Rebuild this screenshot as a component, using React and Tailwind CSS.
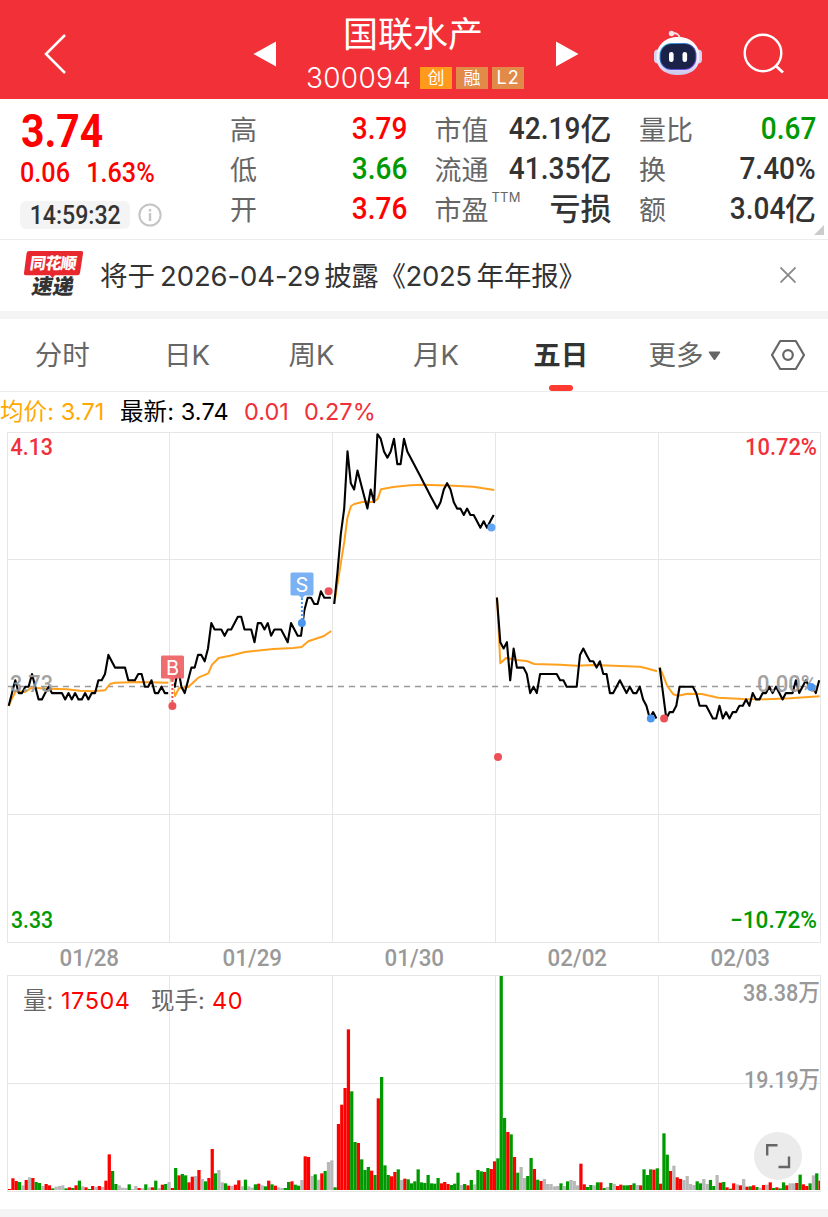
import React from "react";
import clsx from "clsx";

const STEP = 3.322;
const DAY_WIDTH = 162.75;
const BASE_Y = 254.7;
const TICK = 6.36;

// price of each sample, in cents above the previous close
const prices = [
  [-3, -1, 1, -1, -1, 0, 0, 2, 0, -2, -2, -1, 0, -1, -1, -1, -1, -2, -1, -2, -1, -2, -2, -1, -2, -1, -1, 1, 1, 2, 5, 4, 3, 3, 3, 3, 1, 1, 1, 2, 2, 0, 0, 1, -1, -1, 0, -1, -1],
  [1, 0, 3, 0, -1, 1, 3, 3, 5, 5, 4, 6, 10, 9, 9, 9, 8, 9, 9, 10, 11, 11, 9, 9, 9, 7, 10, 10, 9, 10, 8, 9, 9, 9, 8, 7, 10, 9, 8, 8, 12, 14, 14, 13, 13, 15, 14, 14, 14],
  [13, 18, 24, 28, 37, 32, 31, 34, 32, 30, 28, 31, 29, 39.7, 39, 37, 36, 37, 39, 35, 35, 39, 37, 36, 35, 34, 33, 32, 31, 30, 29, 28, 29, 31, 32, 31, 29, 28, 28, 27, 28, 27, 27, 26, 25, 26, 25, 26, 27],
  [14, 7, 6, 7, 1, 6, 3, 3, 3, 2, -1, 0, -1, 2, 2, 2, 2, 2, 2, 1, 1, 0, 0, 0, 0, 5, 6, 5, 4, 4, 3, 4, 2, 2, -1, -1, 0, 1, 0, -1, 0, -1, -1, 0, -2, -3, -5, -4, -5],
  [3, -1, -5, -4, -4, -3, 0, 0, 0, 0, 0, -1, -3, -3, -3, -4, -5, -5, -3, -5, -4, -5, -4, -4, -3, -3, -2, -3, -1, -2, -2, -1, -1, 0, -1, 0, -1, -2, -1, -1, -1, 1, -1, 0, 1, 0, 0, -1, 1],
];

const averages = [
  "8.7,274 12,266.3 16,259 25,260 31.7,255.7 50,256.7 67,257.3 80,258.7 93,259.3 105,258.3 110,252 115,250.7 140,250 168.3,250.7",
  "171.3,248.3 175,264 179,256.3 188.3,255 198.3,245.7 208.3,241.3 212,232.7 218.7,226 230,223.7 245,220 273.3,217 293.3,216 301.7,215 308.3,209.3 323.3,204.3 331.3,199",
  "334.3,171.7 340,136.3 344.3,109.7 347.3,86.3 351,74 354.3,72 363.3,69.7 373.3,70 377.7,67 381,57.3 393.3,55 410,53.3 423.3,52.7 453.3,53.7 473.3,54.7 494.3,58",
  "497,165.3 500.3,231.3 506,226 516.7,228 526.7,229 534.3,232 560,232.7 576.7,233.7 593.3,233 640,234.7 648.3,236.7 657,239.3",
  "660,235.7 667.3,254 673.3,262.3 678.3,263.7 687.3,261.7 701.7,262 718.3,265.7 743.3,267 766.7,267.3 790,266.3 819.7,264.3",
];

const dots = [
  { x: 172.4, y: 274, color: "#eb5257" },
  { x: 328.6, y: 159.2, color: "#eb5257" },
  { x: 498, y: 325, color: "#eb5257" },
  { x: 664.1, y: 286.6, color: "#eb5257" },
  { x: 301.9, y: 191, color: "#4b96ef" },
  { x: 491.4, y: 95.4, color: "#62a4f4" },
  { x: 650.8, y: 286.6, color: "#4b96ef" },
  { x: 811, y: 255, color: "#4b96ef" },
];

// r = up, g = down, x = flat, number is the bar height in thirds of a pixel
const volumes = [
  "r3 r35 r27 g24 x14 r30 x38 r36 g24 g21 x12 r18 r14 g5 x10 x12 x14 g5 r8 g6 r14 g28 x11 r8 g3 r12 x9 r12 x9 r28 r107 g57 g18 x14 x7 x6 g17 x3 x12 r6 x5 g17 x8 r8 g28 x6 r16 g18 x24",
  "r6 g66 r44 g48 g44 r23 r40 x42 r60 x33 g26 r36 r123 g50 x60 x23 g20 r13 x12 r16 r29 x11 g31 x11 x7 g17 r19 x14 g11 r28 g17 r13 x8 x6 g6 g24 r26 g16 g13 x30 r101 r99 x42 g47 x31 r50 g57 x84 x89",
  "g8 r198 r256 r306 r482 g296 g144 r141 g92 g60 g69 r58 g45 r275 g339 g74 g45 r41 r54 g62 x30 r34 g32 g20 g26 g62 g23 g21 g45 g20 g19 g36 r20 r24 r18 g15 g19 g52 x15 g18 r14 g30 x17 g60 g56 r54 g66 r63 r86",
  "g95 g642 g216 r174 g167 r99 g52 x69 x36 g42 g96 r63 g31 r27 x33 x18 x18 x11 x12 g20 x12 g26 x30 x27 x14 r79 r17 g9 g15 x14 g23 r23 g6 x9 g21 x18 r12 r16 g14 g14 r15 g20 x15 r14 g62 g45 g62 r61 g65",
  "r19 g170 g106 r57 x73 r38 r33 x30 x42 x18 x15 g26 g20 x33 x18 g30 g12 x45 r22 g24 r8 g4 r20 x17 r14 x33 r10 g11 r14 g9 x7 r15 x16 r23 g6 r8 g5 g23 r14 x20 x20 r21 g46 r17 r12 g20 x44 g50 r28",
];

const barColors = { r: "#ff0000", g: "#009900", x: "#b8b8b8" };

const dates = ["01/28", "01/29", "01/30", "02/02", "02/03"];

const stats = [
  [
    { label: "高", value: "3.79", color: "text-[#ff0000]" },
    { label: "低", value: "3.66", color: "text-[#009900]" },
    { label: "开", value: "3.76", color: "text-[#ff0000]" },
  ],
  [
    { label: "市值", value: "42.19", unit: "亿" },
    { label: "流通", value: "41.35", unit: "亿" },
    { label: "市盈", sup: "TTM", unit: "亏损" },
  ],
  [
    { label: "量比", value: "0.67", color: "text-[#009900]" },
    { label: "换", value: "7.40%" },
    { label: "额", value: "3.04", unit: "亿" },
  ],
];

const tabs = ["分时", "日K", "周K", "月K", "五日"];

const Robot = () => (
  <svg width="50" height="46" viewBox="0 0 50 46" fill="none">
    <defs>
      <linearGradient id="shell" x1="0" y1="0" x2="0" y2="1">
        <stop offset="0" stopColor="#ffffff" />
        <stop offset="0.6" stopColor="#efeefb" />
        <stop offset="1" stopColor="#c9c6ec" />
      </linearGradient>
      <linearGradient id="visor" x1="0" y1="0" x2="1" y2="1">
        <stop offset="0" stopColor="#35c4e8" />
        <stop offset="0.5" stopColor="#3a55c8" />
        <stop offset="1" stopColor="#9a4cf0" />
      </linearGradient>
    </defs>
    <path d="M19 3.500c4.500-1 7.500 1 7.500 5" stroke="#f6dfe6" strokeWidth="1.800" />
    <circle cx="18.500" cy="3.500" r="2.700" fill="#f7e4ea" />
    <rect x="1" y="19.500" width="8" height="14" rx="4" fill="#d5d3ee" />
    <rect x="41" y="19.500" width="8" height="14" rx="4" fill="#d5d3ee" />
    <path d="M25 7C37 7 46.500 14.500 46.500 27S37 45 25 45 3.500 39.500 3.500 27 13 7 25 7z" fill="url(#shell)" />
    <rect x="6.500" y="13" width="37" height="27" rx="12" fill="url(#visor)" />
    <rect x="7.500" y="14" width="35" height="25" rx="11" fill="#1a2347" />
    <rect x="16" y="22" width="4.600" height="10" rx="2.300" fill="#fff" />
    <rect x="29.500" y="22" width="4.600" height="10" rx="2.300" fill="#fff" />
  </svg>
);

const Header = () => (
  <header className="flex h-[99px] items-center bg-[#f23037] text-white">
    <svg className="mt-[9px] ml-[42px]" width="26" height="42" viewBox="0 0 26 42" fill="none">
      <path d="M23 2 4 21l19 19" stroke="#fff" strokeWidth="2.500" />
    </svg>
    <svg className="mt-[8px] ml-[185px]" width="24" height="26" viewBox="0 0 24 26">
      <path d="M23 .5v25L.5 13z" fill="#fff" />
    </svg>
    <div className="flex w-[278px] flex-col items-center pt-[8px]">
      <h1 className="mr-[6px] text-[35px] leading-[42px]">国联水产</h1>
      <div className="mt-[6px] mr-[2px] flex h-[34px] items-center gap-[4px]">
        <span className="mr-[5px] text-[28px] leading-none font-light tracking-[0.3px]">300094</span>
        <span className="h-[22px] w-8 bg-[#ff9a1c] text-center text-[17px] leading-[22px]">创</span>
        <span className="h-[22px] w-8 bg-[#e28b48] text-center text-[17px] leading-[22px]">融</span>
        <span className="h-[22px] w-8 bg-[#e28b48] text-center text-[18px] leading-[22px] tracking-[1px]">L2</span>
      </div>
    </div>
    <svg className="mt-[8px]" width="24" height="26" viewBox="0 0 24 26">
      <path d="M1 .5v25L23.500 13z" fill="#fff" />
    </svg>
    <div className="mt-[7px] ml-[74px]">
      <Robot />
    </div>
    <svg className="mt-[9px] ml-[40px]" width="42" height="42" viewBox="0 0 42 42" fill="none">
      <circle cx="20" cy="20" r="18.300" stroke="#fff" strokeWidth="2.400" />
      <path d="m33 33 7 6.500" stroke="#fff" strokeWidth="2.800" />
    </svg>
  </header>
);

const StatRow = ({ label, sup, value, unit, color }) => (
  <div className="flex h-[40px] items-center justify-between">
    <div className="flex items-center pt-[3px] text-[27px] leading-[40px] text-[#666]">
      {label}
      {sup && <span className="-mt-[28px] ml-[3px] text-[13px] tracking-[0.2px]">{sup}</span>}
    </div>
    <div className={clsx("flex items-center leading-[40px]", color || "text-[#333]")}>
      {value && (
        <span className="origin-right scale-x-[0.89] font-['Roboto'] text-[31.5px] font-medium">
          {value}
        </span>
      )}
      {unit && <span className="-mt-px text-[31px] font-medium">{unit}</span>}
    </div>
  </div>
);

const Quote = () => (
  <section className="relative flex h-[141px] border-b border-[#ececec] pt-[10px]">
    <div className="w-[230px] pl-[20px] font-['Roboto'] text-[#ff0000]">
      <div className="h-[45px] origin-left scale-x-[0.89] pl-px text-[46px] leading-[44px] font-bold">3.74</div>
      <div className="flex h-[37px] origin-left scale-x-[0.9] items-center gap-[18px] text-[28px] font-medium">
        <span>0.06</span>
        <span>1.63%</span>
      </div>
      <div className="mt-[10px] flex items-center gap-[8px]">
        <div className="flex h-[28px] w-[110px] items-center justify-center rounded-md bg-[#f4f4f4]">
          <span className="scale-x-[0.89] text-[26px] leading-none font-medium text-[#333]">14:59:32</span>
        </div>
        <svg width="24" height="24" viewBox="0 0 24 24" fill="none">
          <circle cx="12" cy="12" r="10.600" stroke="#c4c4c4" strokeWidth="2" />
          <path d="M12 10v8M12 6v2.400" stroke="#c4c4c4" strokeWidth="2.400" />
        </svg>
      </div>
    </div>
    <div className="flex gap-[27.500px]">
      {stats.map((rows, i) => (
        <div key={i} className="w-[177px]">
          {rows.map((row) => (
            <StatRow key={row.label} {...row} />
          ))}
        </div>
      ))}
    </div>
    <svg className="absolute right-[4px] bottom-[4px]" width="10" height="10" viewBox="0 0 10 10">
      <path d="M10 0v10H0z" fill="#ccc" />
    </svg>
  </section>
);

const Notice = () => (
  <section className="flex h-[71px] items-center">
    <div className="relative ml-[24px] flex h-[48px] w-[59px] flex-col items-center">
      <svg className="absolute -top-px left-0" width="59" height="28" viewBox="0 0 59 28">
        <path d="M5 0h52q2.500 0 2 2.500L56 22q-.5 2.200-2.500 2.200H31L28.500 27 26 24.200H2Q-.3 24.200 0 22L2.600 2.200Q3 0 5 0z" fill="#e8272f" />
      </svg>
      <span className="relative -mt-px h-[25px] -skew-x-[8deg] text-[16px] leading-[24px] font-black tracking-[-0.6px] text-white">
        同花顺
      </span>
      <span className="mr-[2px] -skew-x-[10deg] text-[21px] leading-[22px] font-black text-[#333]">速递</span>
    </div>
    <p className="ml-[17px] flex text-[27.500px] leading-[38px] text-[#333]">
      <span>将于</span>
      <span className="ml-[5px] tracking-[-0.1px]">2026-04-29</span>
      <span className="ml-[4px] tracking-[-0.4px]">披露《</span>
      <span className="tracking-[-0.4px]">2025</span>
      <span className="ml-[5px] tracking-[-0.2px]">年年报》</span>
    </p>
    <svg className="mt-[-2px] mr-[32px] ml-auto" width="16" height="16" viewBox="0 0 16 16">
      <path d="m.5.5 15 15m0-15-15 15" stroke="#888" strokeWidth="1.800" />
    </svg>
  </section>
);

const Tabs = () => (
  <nav className="flex h-[73px] border-b border-[#ececec] text-[27.500px] text-[#666]">
    {tabs.map((tab) => (
      <div
        key={tab}
        className={clsx(
          "relative flex w-[124.600px] items-center justify-center pt-[2px]",
          tab === "五日" && "font-bold text-[#333]"
        )}
      >
        {tab}
        {tab === "五日" && (
          <span className="absolute bottom-0 left-1/2 h-[6px] w-[24px] -translate-x-1/2 rounded-full bg-[#ff3a30]" />
        )}
      </div>
    ))}
    <div className="flex w-[124px] items-center justify-center gap-[5px] pt-[2px]">
      更多
      <svg width="13" height="10" viewBox="0 0 13 10">
        <path d="M1.500.5h10q1.200 0 .6 1.200L7.400 8.500q-.9 1.200-1.800 0L.9 1.700Q.3.500 1.500.5z" fill="#666" />
      </svg>
    </div>
    <div className="flex flex-1 items-center justify-center pl-[2px]">
      <svg width="36" height="32" viewBox="0 0 36 32" fill="none" stroke="#666" strokeWidth="2.200">
        <path d="M10.200 2h15.600L34 16l-8.200 14H10.200L2 16z" strokeLinejoin="round" />
        <circle cx="18" cy="16" r="4.800" />
      </svg>
    </div>
  </nav>
);

const Legend = () => (
  <div className="flex h-[40px] items-center text-[23.500px] text-black">
    <span className="w-[120px] tracking-[0.1px] text-[#ffa800]">均价: 3.71</span>
    <span className="w-[124px] tracking-[0.1px]">最新: 3.74</span>
    <span className="w-[60px] text-[#f0303a]">0.01</span>
    <span className="text-[#f0303a]">0.27%</span>
  </div>
);

const ChartText = ({ x, y, width, fill, size = 24, children }) => (
  <text
    x={x}
    y={y}
    textLength={width}
    lengthAdjust="spacingAndGlyphs"
    fontSize={size}
    fontWeight="500"
    fill={fill}
    fontFamily="Roboto, 'Noto Sans CJK SC', sans-serif"
  >
    {children}
  </text>
);

const PriceChart = () => (
  <svg className="block" width="828" height="511" viewBox="0 0 828 511" fill="none">
    <g stroke="#e6e6e6" shapeRendering="crispEdges">
      <rect x="7.500" y="0.500" width="813" height="510" />
      <path d="M7 127.500h813M7 382.500h813" />
      <path d="M169.500 0v510M332.500 0v510M495.500 0v510M658.500 0v510" />
    </g>
    <path d="M8 254.500h812" stroke="#999" strokeWidth="1.400" strokeDasharray="6 5" />
    {averages.map((points) => (
      <polyline key={points} points={points} stroke="#ffa11e" strokeWidth="2" strokeLinejoin="round" />
    ))}
    {prices.map((day, d) => (
      <polyline
        key={d}
        points={day
          .map((p, i) => `${(8.7 + d * DAY_WIDTH + i * STEP).toFixed(1)},${(BASE_Y - p * TICK).toFixed(1)}`)
          .join(" ")}
        stroke="#000"
        strokeWidth="2.100"
        strokeLinejoin="round"
      />
    ))}

    <g opacity="0.9">
      <ChartText x="10" y="259.500" width="43" fill="#999">3.73</ChartText>
      <ChartText x="757" y="259.500" width="60" fill="#999">0.00%</ChartText>
    </g>
    <ChartText x="10.500" y="23" width="42.500" fill="#f0303a">4.13</ChartText>
    <ChartText x="745" y="23" width="72" fill="#f0303a">10.72%</ChartText>
    <ChartText x="11" y="496" width="42" fill="#009900">3.33</ChartText>
    <ChartText x="730" y="496" width="87" fill="#009900">−10.72%</ChartText>

    <path d="M172.400 248v24" stroke="#fff" strokeWidth="3" />
    <path d="M172.400 248v24" stroke="#eb5257" strokeWidth="2" strokeDasharray="2 2" />
    <path d="M301.900 166v22" stroke="#fff" strokeWidth="3" />
    <path d="M301.900 166v22" stroke="#4b96ef" strokeWidth="2" strokeDasharray="2 2" />
    {dots.map((dot) => (
      <circle key={dot.x} cx={dot.x} cy={dot.y} r="4" fill={dot.color} />
    ))}
    <g fontSize="20" fill="#fff" textAnchor="middle" fontFamily="Inter, sans-serif">
      <path d="M162.500 223.500h20q1.500 0 1.500 1.500v20q0 1.500-1.500 1.500h-7l-3.100 3-3.100-3h-6.800q-1.500 0-1.500-1.500v-20q0-1.500 1.500-1.500z" fill="#ee6468" fillOpacity="0.950" />
      <text x="172.500" y="242.800">B</text>
      <path d="M292 140.500h20q1.500 0 1.500 1.500v20q0 1.500-1.500 1.500h-7l-3.100 3-3.100-3H292q-1.500 0-1.500-1.500v-20q0-1.500 1.500-1.500z" fill="#7ab1f4" />
      <text x="302" y="159.800">S</text>
    </g>
  </svg>
);

const VolumeChart = () => (
  <svg className="block" width="828" height="217" viewBox="0 0 828 217" fill="none">
    <g stroke="#e6e6e6" shapeRendering="crispEdges">
      <rect x="7.500" y="0.500" width="813" height="215.500" />
      <path d="M7 108.500h813M169.500 0v216M332.500 0v216M495.500 0v216M658.500 0v216" />
    </g>
    {volumes.map((day, d) =>
      day.split(" ").map((bar, i) => {
        const h = Number(bar.slice(1)) / 3;
        const x = 8 + (d * 49 + i) * 3.3215;
        return (
          <rect
            key={`${d}-${i}`}
            x={x}
            y={215 - h}
            width={Math.min(3.25, 820 - x)}
            height={h}
            fill={barColors[bar[0]]}
          />
        );
      })
    )}
    <ChartText x="743" y="26" width="77" fill="#999">38.38万</ChartText>
    <ChartText x="744" y="112.500" width="76" fill="#999">19.19万</ChartText>
  </svg>
);

export default function App() {
  return (
    <div className="h-[1217px] w-[828px] overflow-hidden bg-white font-['Inter','Noto_Sans_CJK_SC',sans-serif]">
      <Header />
      <Quote />
      <Notice />
      <div className="h-[8px] bg-[#f4f4f4]" />
      <Tabs />
      <Legend />
      <PriceChart />
      <div className="flex h-[32px] items-center pl-[8px] font-['Roboto'] text-[23.500px] font-medium text-[#999]">
        {dates.map((date) => (
          <span key={date} className="w-[162.700px] scale-x-[0.95] text-center">
            {date}
          </span>
        ))}
      </div>
      <div className="relative h-[234px]">
        <VolumeChart />
        <div className="absolute top-[10px] left-[23px] flex text-[23.500px] leading-[32px] text-[#666]">
          <span className="w-[38px]">量:</span>
          <span className="w-[90px] tracking-[0.500px] text-[#ff0000]">17504</span>
          <span className="w-[61px]">现手:</span>
          <span className="tracking-[0.500px] text-[#ff0000]">40</span>
        </div>
        <button className="absolute top-[157px] left-[754px] flex size-12 items-center justify-center rounded-full bg-[#ebebeb]">
          <svg width="26" height="26" viewBox="0 0 26 26" fill="none" stroke="#666" strokeWidth="2.400">
            <path d="M2.200 12.500V2.200h10.300M24 13.500v10.500H13.500" />
          </svg>
        </button>
      </div>
      <div className="h-[8px] bg-[#f4f4f4]" />
    </div>
  );
}
